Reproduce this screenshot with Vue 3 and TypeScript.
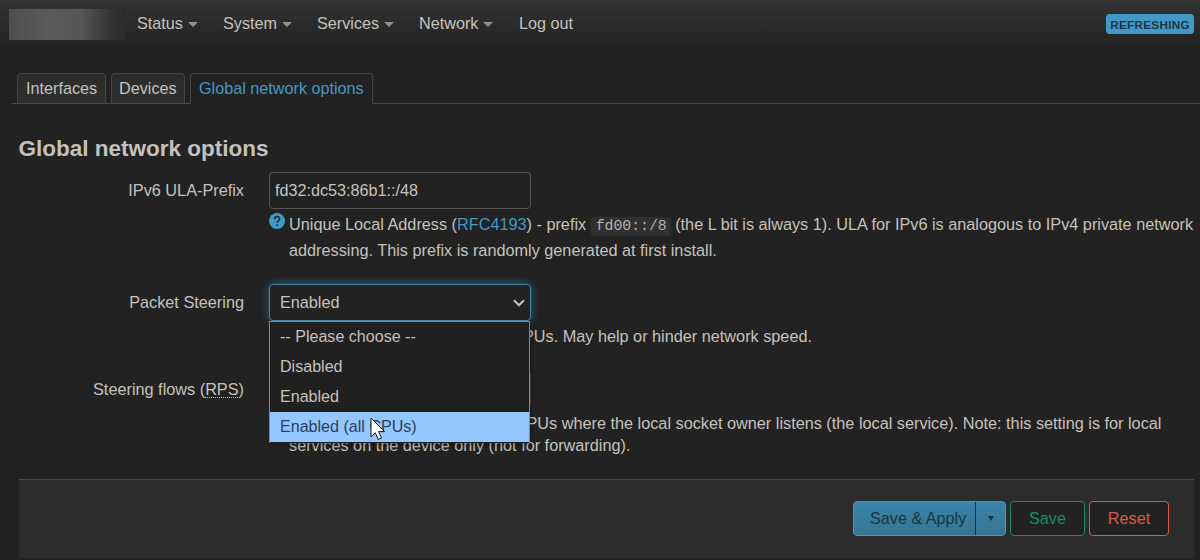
<script setup lang="ts">
interface MenuItem {
  label: string
  caret: boolean
  cls: string
}

const menu: MenuItem[] = [
  { label: 'Status', caret: true, cls: 'm-status' },
  { label: 'System', caret: true, cls: 'm-system' },
  { label: 'Services', caret: true, cls: 'm-services' },
  { label: 'Network', caret: true, cls: 'm-network' },
  { label: 'Log out', caret: false, cls: 'm-logout' },
]

const tabs = [
  { label: 'Interfaces', cls: 't-interfaces', active: false },
  { label: 'Devices', cls: 't-devices', active: false },
  { label: 'Global network options', cls: 't-global', active: true },
]

const options = ['-- Please choose --', 'Disabled', 'Enabled', 'Enabled (all CPUs)']
const hovered = 3
</script>

<template>
  <div class="page">
    <header class="topbar">
      <div class="brand"></div>
      <nav class="menu">
        <a v-for="m in menu" :key="m.label" :class="['menu-item', m.cls]">
          <span>{{ m.label }}</span><i v-if="m.caret" class="caret"></i>
        </a>
      </nav>
      <span class="badge">REFRESHING</span>
    </header>

    <ul class="tabs">
      <li v-for="t in tabs" :key="t.label" :class="['tab', t.cls, { active: t.active }]">{{ t.label }}</li>
      <li class="tab-rest"></li>
    </ul>

    <main>
      <h3>Global network options</h3>

      <section class="row row-ula">
        <label class="name">IPv6 ULA-Prefix</label>
        <div class="field">
          <div class="input">fd32:dc53:86b1::/48</div>
          <div class="help help-ula">
            <svg class="icon" viewBox="0 0 16 16">
              <circle cx="8" cy="8" r="8" />
              <path d="M5.600 6.100C5.700 4.500 6.700 3.600 8.100 3.600c1.400 0 2.400.9 2.400 2.200 0 1.900-2.300 2-2.300 4" />
              <rect x="7.400" y="11.200" width="1.600" height="1.600" />
            </svg>
            <div>
              <p class="l1">Unique Local Address (<a>RFC4193</a>) - prefix <code>fd00::/8</code> (the L bit is always 1). ULA for IPv6 is analogous to IPv4 private network</p>
              <p class="l2">addressing. This prefix is randomly generated at first install.</p>
            </div>
          </div>
        </div>
      </section>

      <section class="row row-steer">
        <label class="name">Packet Steering</label>
        <div class="field">
          <div class="select">
            <span>Enabled</span>
            <svg class="chevron" viewBox="0 0 12 8"><path d="M1 1.300l5 5 5-5" /></svg>
            <div class="dropdown">
              <div v-for="(o, i) in options" :key="o" :class="['option', { hover: i === hovered }]">{{ o }}</div>
              <svg class="cursor" viewBox="0 0 16 24">
                <path d="M1 1v19l4.300-4.100 3 6.600 3.300-1.500-3-6.400h6z" />
              </svg>
            </div>
          </div>
          <div class="help help-steer">
            <p>Enable packet steering across CPUs. May help or hinder network speed.</p>
          </div>
        </div>
      </section>

      <section class="row row-rps">
        <label class="name">Steering flows (<abbr>RPS</abbr>)</label>
        <div class="field">
          <div class="input"></div>
          <div class="help help-rps">
            <div>
              <p>Directs packet flows to specific CPUs where the local socket owner listens (the local service). Note: this setting is for local</p>
              <p>services on the device only (not for forwarding).</p>
            </div>
          </div>
        </div>
      </section>
    </main>

    <footer class="actions">
      <div class="split">
        <span class="apply">Save &amp; Apply</span>
        <span class="more"><i></i></span>
      </div>
      <button class="btn save">Save</button>
      <button class="btn reset">Reset</button>
    </footer>
  </div>
</template>

<style>
body {
  margin: 0;
  background: #222;
}
</style>

<style scoped>
.page {
  box-sizing: border-box;
  width: 1200px;
  height: 560px;
  overflow: hidden;
  display: flex;
  flex-direction: column;
  background: #222;
  color: #c5c2be;
  font: 16.2px/22px "Liberation Sans", Arial, sans-serif;
  white-space: nowrap;
}
.page p,
.page ul {
  margin: 0;
  padding: 0;
}
.topbar {
  flex: none;
  box-sizing: border-box;
  height: 48px;
  padding: 0 6px 0 9px;
  display: flex;
  align-items: flex-start;
  background: linear-gradient(#333, #222);
}
.brand {
  margin-top: 9px;
  width: 117px;
  height: 31px;
  background: linear-gradient(90deg, #4c4e4f, #5a5b5c 35%, #545554 62%, #333230 88%, #2c2b2a);
}
.menu {
  display: flex;
  margin: 12px 0 0 11px;
}
.menu-item {
  display: flex;
  align-items: center;
}
.m-status { width: 86px; }
.m-system { width: 94px; }
.m-services { width: 102px; }
.m-network { width: 100px; }
.caret {
  margin: 2px 0 0 5px;
  border: 5px solid transparent;
  border-top-color: #92908e;
  border-bottom: 0;
}
.badge {
  box-sizing: border-box;
  margin: 14px 0 0 auto;
  width: 88px;
  height: 20px;
  border-radius: 4px;
  background: #409ac5;
  color: #1f333d;
  font-size: 11.700px;
  font-weight: bold;
  line-height: 21px;
  letter-spacing: 0.3px;
  text-align: center;
}
.tabs {
  flex: none;
  display: flex;
  height: 32px;
  margin: 24px 0 0 12px !important;
  list-style: none;
}
.tabs::before {
  content: "";
  width: 5px;
  border-bottom: 1px solid #494948;
  box-sizing: border-box;
}
.tab {
  box-sizing: border-box;
  position: relative;
  margin-top: 1px;
  padding-left: 8px;
  border: 1px solid #444;
  border-radius: 4px 4px 0 0;
  background: linear-gradient(#2b2b2b, #303030);
  line-height: 28px;
}
.tab:not(.active)::after {
  content: "";
  position: absolute;
  left: 100%;
  bottom: -1px;
  width: 6px;
  height: 1px;
  background: #494948;
}
.t-interfaces { width: 89px; }
.t-devices { width: 74px; margin-left: 5px; padding-left: 7px; }
.t-global { width: 183px; margin-left: 5px; }
.tab.active {
  background: #222;
  border-bottom-color: #222;
  color: #409ac5;
}
.tab-rest {
  flex: 1;
  box-sizing: border-box;
  border-bottom: 1px solid #494948;
}
main {
  flex: none;
  height: 375px;
}
h3 {
  margin: 0;
  padding: 30px 0 0 18.500px;
  height: 38px;
  font-size: 22.500px;
  line-height: 30px;
}
.row {
  display: flex;
  gap: 25px;
}
.row-ula { height: 112px; }
.row-steer { height: 87px; }
.name {
  width: 244px;
  font-size: 16.280px;
  line-height: 36px;
  text-align: right;
}
.field {
  width: 924px;
}
.input,
.select {
  box-sizing: border-box;
  width: 262px;
  height: 37px;
  border: 1px solid #575655;
  border-radius: 4px;
  padding-left: 5px;
  line-height: 35px;
}
.help {
  display: flex;
  padding-left: 20px;
  margin-top: 4px;
  font-size: 16.250px;
}
.help-ula {
  padding-left: 0;
  margin-top: 2px;
}
.icon {
  flex: none;
  width: 16px;
  height: 16px;
  margin: 2px 4px 0 0;
}
.icon circle { fill: #409ac5; }
.icon rect { fill: #222; }
.icon path {
  fill: none;
  stroke: #222;
  stroke-width: 1.500;
}
.l1,
.l2 { height: 26px; line-height: 26px; }
a { color: inherit; }
.l1 a { color: #409ac5; }
code {
  display: inline-block;
  box-sizing: border-box;
  width: 80px;
  height: 19px;
  padding-left: 5px;
  border-radius: 3px;
  background: #303030;
  color: #b5b2ae;
  font: 14.800px/19px "Liberation Mono", monospace;
  vertical-align: baseline;
}
.select {
  position: relative;
  display: flex;
  align-items: center;
  justify-content: space-between;
  padding: 0 5px 0 10px;
  border-color: #4286ac;
  box-shadow: 0 0 8px rgba(48, 120, 170, 0.8);
}
.chevron {
  width: 12px;
  height: 8px;
  fill: none;
  stroke: #c5c2be;
  stroke-width: 2;
}
.dropdown {
  position: absolute;
  z-index: 2;
  top: 36px;
  left: -1px;
  box-sizing: border-box;
  width: 261px;
  height: 122px;
  border: 1px solid #85888a;
  border-bottom: 0;
  background: #202020;
  box-shadow: 2px 3px 4px rgba(0, 0, 0, 0.25);
}
.option {
  box-sizing: border-box;
  height: 30px;
  padding-left: 10px;
  font-size: 16.080px;
  line-height: 28px;
}
.option.hover {
  background: #94c6ff;
  color: #2c4057;
}
.cursor {
  position: absolute;
  left: 100px;
  top: 95px;
  width: 16px;
  height: 24px;
}
.cursor path {
  fill: #fff;
  stroke: #161616;
}
abbr {
  text-decoration: underline dotted 1px;
  text-underline-offset: 2px;
}
.actions {
  flex: none;
  box-sizing: border-box;
  width: 1175px;
  height: 79px;
  margin-left: 19px;
  padding: 21px 25px 0 0;
  display: flex;
  justify-content: flex-end;
  border-top: 1px solid #484848;
  background: #2c2c2c;
  box-shadow: 0 0 3px #292929;
}
.split {
  box-sizing: border-box;
  width: 153px;
  height: 35px;
  display: flex;
  border: 1px solid #409ac5;
  border-radius: 4px;
  background: linear-gradient(#3985a9, #357492);
  color: #1c3541;
  line-height: 33px;
}
.apply {
  box-sizing: border-box;
  width: 122px;
  padding-left: 16px;
  border-right: 1px solid #1e2b31;
}
.more {
  flex: 1;
  display: flex;
  align-items: center;
  justify-content: center;
}
.more i {
  border: 3px solid transparent;
  border-top: 5px solid #1c3039;
  border-bottom: 0;
}
.btn {
  box-sizing: border-box;
  height: 35px;
  padding: 0 0 2px;
  border: 1px solid;
  border-radius: 4px;
  background: #222;
  font: inherit;
}
.save {
  width: 75px;
  margin: 0 4px;
  color: #168c68;
}
.reset {
  width: 80px;
  color: #d75b4d;
}
</style>
